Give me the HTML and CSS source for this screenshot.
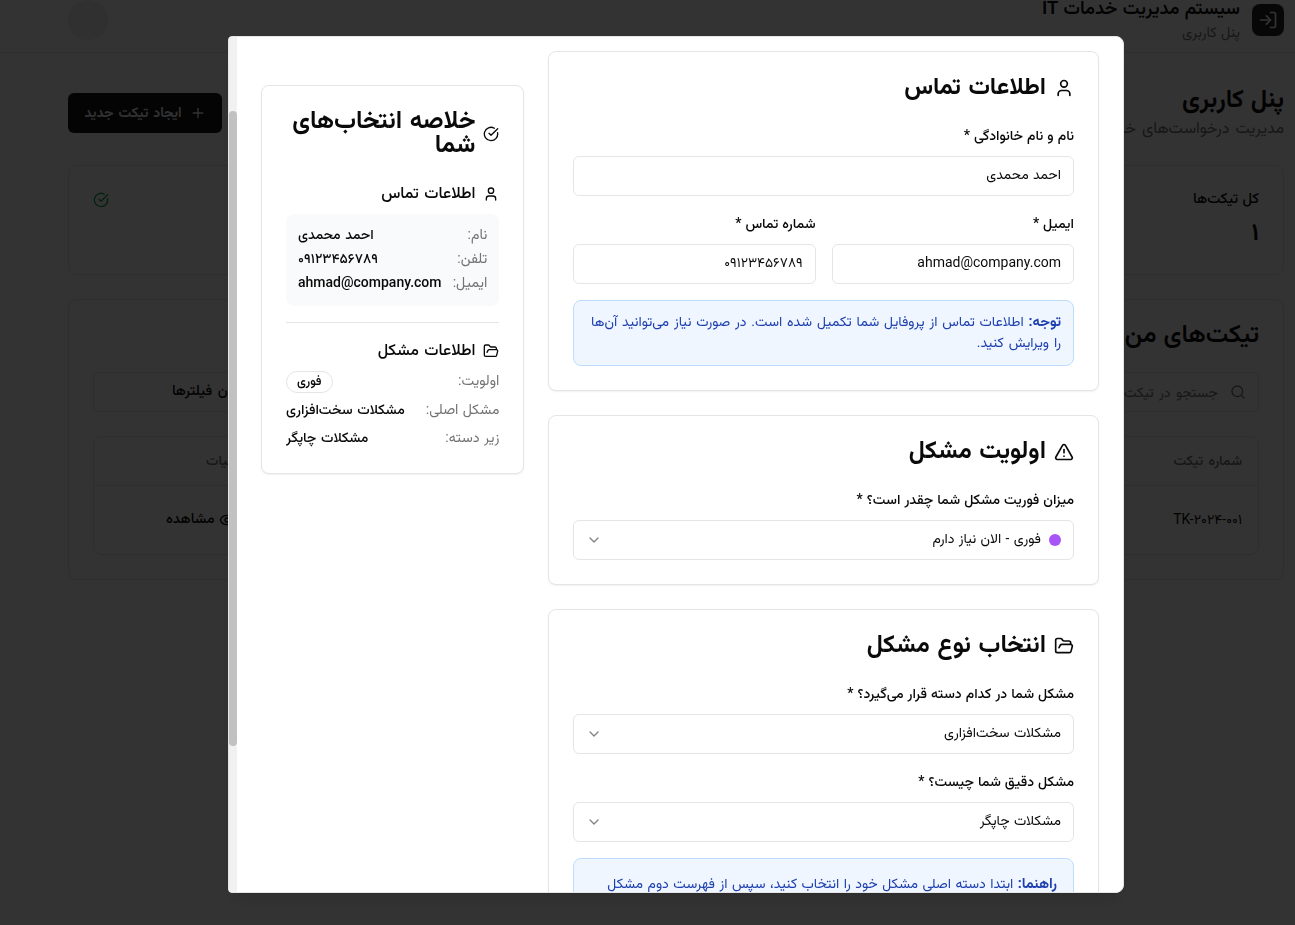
FILE: index.html
```html
<!DOCTYPE html>
<html lang="fa" dir="rtl">
<head>
<meta charset="utf-8">
<title>سیستم مدیریت خدمات IT</title>
<link rel="stylesheet" href="styles.css">
</head>
<body>
<svg width="0" height="0" class="sprite" aria-hidden="true">
  <symbol id="user" viewBox="0 0 24 24"><path d="M19 21v-2a4 4 0 0 0-4-4H9a4 4 0 0 0-4 4v2"/><circle cx="12" cy="7" r="4"/></symbol>
  <symbol id="check" viewBox="0 0 24 24"><path d="M21.801 10A10 10 0 1 1 17 3.335"/><path d="m9 11 3 3L22 4"/></symbol>
  <symbol id="folder" viewBox="0 0 24 24"><path d="m6 14 1.5-2.9A2 2 0 0 1 9.24 10H20a2 2 0 0 1 1.94 2.5l-1.54 6a2 2 0 0 1-1.95 1.5H4a2 2 0 0 1-2-2V5a2 2 0 0 1 2-2h3.9a2 2 0 0 1 1.69.9l.81 1.2a2 2 0 0 0 1.67.9H18a2 2 0 0 1 2 2v2"/></symbol>
  <symbol id="alert" viewBox="0 0 24 24"><path d="m21.73 18-8-14a2 2 0 0 0-3.48 0l-8 14A2 2 0 0 0 4 21h16a2 2 0 0 0 1.73-3"/><path d="M12 9v4"/><path d="M12 17h.01"/></symbol>
  <symbol id="chevron" viewBox="0 0 24 24"><path d="m6 9 6 6 6-6"/></symbol>
  <symbol id="login" viewBox="0 0 24 24"><path d="M15 3h4a2 2 0 0 1 2 2v14a2 2 0 0 1-2 2h-4"/><path d="m10 17 5-5-5-5"/><path d="M15 12H3"/></symbol>
  <symbol id="plus" viewBox="0 0 24 24"><path d="M5 12h14"/><path d="M12 5v14"/></symbol>
  <symbol id="search" viewBox="0 0 24 24"><circle cx="11" cy="11" r="8"/><path d="m21 21-4.3-4.3"/></symbol>
  <symbol id="eye" viewBox="0 0 24 24"><path d="M2.06 12.35a1 1 0 0 1 0-.7 10.75 10.75 0 0 1 19.88 0 1 1 0 0 1 0 .7 10.75 10.75 0 0 1-19.88 0"/><circle cx="12" cy="12" r="3"/></symbol>
</svg>

<div class="page">
  <header class="topbar">
    <div class="brand">
      <span class="logo"><svg class="icon i20"><use href="#login"/></svg></span>
      <div class="brand-text"><div class="brand-name"><span>سیستم مدیریت خدمات IT</span></div><div class="brand-sub"><span>پنل کاربری</span></div></div>
    </div>
    <span class="avatar"></span>
  </header>
  <main class="content">
    <div class="heading">
      <div><h1><span>پنل کاربری</span></h1><p><span>مدیریت درخواست‌های خدمات</span></p></div>
      <button class="new-ticket"><svg class="icon i16"><use href="#plus"/></svg><span>ایجاد تیکت جدید</span></button>
    </div>
    <div class="stats">
      <div class="stat"><div><div class="stat-label"><span>کل تیکت‌ها</span></div><div class="stat-value"><span>۱</span></div></div></div>
      <div class="stat"></div>
      <div class="stat"></div>
      <div class="stat"><div></div><svg class="icon i16 green"><use href="#check"/></svg></div>
    </div>
    <section class="tickets">
      <h2><span>تیکت‌های من</span></h2>
      <div class="filters">
        <div class="search"><svg class="icon i16"><use href="#search"/></svg><span>جستجو در تیکت</span></div>
        <div class="filter-btn"><span>نشان دادن فیلترها</span></div>
      </div>
      <div class="table">
        <div class="tr th"><span>شماره تیکت</span><span class="ops">عملیات</span></div>
        <div class="tr td"><span class="tk" dir="ltr">TK-۲۰۲۴-۰۰۱</span><span class="view"><svg class="icon i16"><use href="#eye"/></svg><span>مشاهده</span></span></div>
      </div>
    </section>
  </main>
</div>

<div class="overlay"></div>
<div class="modal" role="dialog">
  <div class="modal-body">
    <div class="forms">
      <section class="card">
        <h3><svg class="icon i20"><use href="#user"/></svg><span>اطلاعات تماس</span></h3>
        <label><span>نام و نام خانوادگی *</span></label>
        <div class="field"><span>احمد محمدی</span></div>
        <div class="two">
          <div><label><span>ایمیل *</span></label><div class="field"><span class="latin">ahmad@company.com</span></div></div>
          <div><label><span>شماره تماس *</span></label><div class="field"><span class="num">۰۹۱۲۳۴۵۶۷۸۹</span></div></div>
        </div>
        <div class="note"><b>توجه:</b> اطلاعات تماس از پروفایل شما تکمیل شده است. در صورت نیاز می‌توانید آن‌ها<br>را ویرایش کنید.</div>
      </section>
      <section class="card">
        <h3 class="wide"><svg class="icon i20"><use href="#alert"/></svg><span>اولویت مشکل</span></h3>
        <label><span>میزان فوریت مشکل شما چقدر است؟ *</span></label>
        <div class="field"><i class="dot"></i><span>فوری - الان نیاز دارم</span><svg class="icon i16 chev"><use href="#chevron"/></svg></div>
      </section>
      <section class="card">
        <h3 class="wide"><svg class="icon i20"><use href="#folder"/></svg><span>انتخاب نوع مشکل</span></h3>
        <label><span>مشکل شما در کدام دسته قرار می‌گیرد؟ *</span></label>
        <div class="field"><span>مشکلات سخت‌افزاری</span><svg class="icon i16 chev"><use href="#chevron"/></svg></div>
        <label><span>مشکل دقیق شما چیست؟ *</span></label>
        <div class="field"><span>مشکلات چاپگر</span><svg class="icon i16 chev"><use href="#chevron"/></svg></div>
        <div class="note help"><b>راهنما:</b> ابتدا دسته اصلی مشکل خود را انتخاب کنید، سپس از فهرست دوم مشکل</div>
      </section>
    </div>
    <aside class="card summary">
      <h3><svg class="icon i16"><use href="#check"/></svg><span>خلاصه انتخاب‌های<br>شما</span></h3>
      <h4><svg class="icon i16"><use href="#user"/></svg><span>اطلاعات تماس</span></h4>
      <div class="box">
        <div class="row"><span class="k">نام:</span><span class="v">احمد محمدی</span></div>
        <div class="row"><span class="k">تلفن:</span><span class="v num">۰۹۱۲۳۴۵۶۷۸۹</span></div>
        <div class="row"><span class="k">ایمیل:</span><span class="v latin">ahmad@company.com</span></div>
      </div>
      <hr>
      <h4><svg class="icon i16"><use href="#folder"/></svg><span>اطلاعات مشکل</span></h4>
      <div class="rows">
        <div class="row"><span class="k">اولویت:</span><span class="badge">فوری</span></div>
        <div class="row"><span class="k">مشکل اصلی:</span><span class="v">مشکلات سخت‌افزاری</span></div>
        <div class="row"><span class="k">زیر دسته:</span><span class="v">مشکلات چاپگر</span></div>
      </div>
    </aside>
  </div>
  <div class="scrollbar"><div class="thumb"></div></div>
</div>
</body>
</html>
```
FILE: styles.css
```css
* { box-sizing: border-box; margin: 0; padding: 0; }
body {
  height: 925px; overflow: hidden; background: #fff; color: #0a0a0a;
  font: 14px/20px Roboto, "Vazirmatn", "Noto Sans Arabic", "Noto Sans", "DejaVu Sans", sans-serif;
  white-space: nowrap; word-spacing: .8px;
}
.sprite { position: absolute; }
.icon { fill: none; stroke: currentColor; stroke-width: 2; stroke-linecap: round; stroke-linejoin: round; flex: none; }
.i16 { width: 16px; height: 16px; }
.i20 { width: 20px; height: 20px; }

.topbar { height: 53px; border-bottom: 1px solid #e5e5e5; padding: 0 11px 0 68px; display: flex; justify-content: space-between; align-items: flex-start; }
.brand { display: flex; gap: 12px; }
.logo { width: 32px; height: 32px; margin-top: 4px; border-radius: 8px; background: #262626; color: #fff; display: flex; align-items: center; justify-content: center; }
.brand-name { font-size: 18.4px; font-weight: 600; line-height: 20px; margin-top: -2px; }
.brand-sub { font-size: 14.4px; color: #737373; margin-top: 5px; }
.avatar { width: 40px; height: 40px; border-radius: 50%; background: #f0f0f0; }
.content { padding: 32px 11px 0 68px; }
.heading { display: flex; justify-content: space-between; height: 80px; }
.heading h1 { font-size: 24.8px; line-height: 32px; margin: -2px 0 1px; }
.heading p { font-size: 16px; line-height: 24px; color: #737373; word-spacing: 2px; }
.new-ticket { height: 40px; width: 154px; margin-top: 8px; border: 0; border-radius: 6px; background: #171717; color: #fafafa; font: inherit; word-spacing: 1.5px; font-weight: 600; display: flex; align-items: center; gap: 8px; justify-content: center; }
.new-ticket span { margin-bottom: 3px; }
.stats { display: grid; grid-template-columns: repeat(4, 1fr); gap: 24px; }
.stat { height: 110px; border: 1px solid #e5e5e5; border-radius: 8px; padding: 24px; display: flex; justify-content: space-between; }
.stat-label { font-size: 14.6px; font-weight: 500; margin-top: -2px; }
.stat-value { font-size: 24px; line-height: 32px; font-weight: 700; margin-top: 8px; }
.green { color: #16a34a; margin-top: 2px; }
.tickets { margin-top: 24px; border: 1px solid #e5e5e5; border-radius: 8px; padding: 24px; height: 281px; }
.tickets h2 { font-size: 25px; line-height: 24px; font-weight: 600; margin-top: -2px; }
.filters { display: flex; justify-content: space-between; margin-top: 26px; }
.search { width: 700px; height: 40px; border: 1px solid #e5e5e5; border-radius: 6px; padding: 0 12px; color: #737373; display: flex; align-items: center; gap: 12px; word-spacing: 2px; }
.filter-btn { width: 200px; height: 40px; border: 1px solid #e5e5e5; border-radius: 6px; padding: 0 0 3px 78px; font-size: 14.4px; font-weight: 500; word-spacing: 2px; display: flex; align-items: center; justify-content: flex-end; }
.table { margin-top: 24px; border: 1px solid #e5e5e5; border-radius: 8px; height: 119px; }
.tr { display: flex; justify-content: space-between; align-items: center; padding: 0 16px; }
.th { height: 49px; border-bottom: 1px solid #e5e5e5; color: #737373; font-weight: 500; padding-bottom: 3px; word-spacing: 2px; }
.td { height: 68px; }
.tk { margin-bottom: 2px; }
.ops { margin-left: 96px; }
.view { margin-left: 56px; display: flex; align-items: center; gap: 5px; font-weight: 500; font-size: 14.4px; }
.view span { margin-bottom: 2px; }

.overlay { position: fixed; inset: 0; background: rgba(0, 0, 0, .8); }
.modal {
  position: fixed; left: 228px; top: 36px; width: 896px; height: 857px;
  background: #fff; border: 1px solid #e5e5e5; border-radius: 4px 8px 8px 4px; overflow: hidden;
  box-shadow: 0 10px 15px -3px rgba(0, 0, 0, .1), 0 4px 6px -4px rgba(0, 0, 0, .1);
  display: flex;
}
.modal-body { flex: 1; padding: 14px 24px 0; display: grid; grid-template-columns: 550.66px 263.33px; gap: 24px; align-items: start; }
.forms { display: flex; flex-direction: column; gap: 24px; }
.card { border: 1px solid #e5e5e5; border-radius: 8px; padding: 24px; background: #fff; box-shadow: 0 1px 2px rgba(0, 0, 0, .06); }
.card h3 { display: flex; align-items: center; gap: 8px; font-size: 24px; line-height: 24px; font-weight: 700; margin-bottom: 24px; word-spacing: 1.5px; }
.card h3.wide { font-size: 24.4px; }
.card h3 span { margin: -2px 0 2px; }
.card label { display: block; line-height: 24px; margin: -1px 0 9px; font-weight: 500; word-spacing: .5px; }
.field { height: 40px; border: 1px solid #e5e5e5; border-radius: 6px; padding: 0 12px; display: flex; align-items: center; margin-bottom: 16px; }
.field span { margin-bottom: 4px; }
.two { display: grid; grid-template-columns: 1fr 1fr; gap: 16px; }
.card > .field:last-child { margin-bottom: 0; }
.num { font-size: 13.8px; }
.dot { width: 12px; height: 12px; border-radius: 50%; background: #a855f7; margin-left: 8px; }
.chev { margin-right: auto; opacity: .5; }
.note { height: 66px; border: 1px solid #bfdbfe; border-radius: 8px; background: #eff6ff; color: #1e40af; padding: 10px 12px; word-spacing: 1.35px; }
.note b { font-weight: 700; font-size: 14.4px; }
.help { padding: 14px 16px; height: 88px; word-spacing: 1px; }

.summary { margin-top: 34px; height: 389px; }
.summary h3 { font-size: 24.6px; }
.summary h4 { display: flex; align-items: center; gap: 8px; font-size: 16px; line-height: 24px; font-weight: 500; word-spacing: 1.5px; }
.summary h4 span { margin: -1px 0 1px; }
.box { margin-top: 8px; padding: 12px; border-radius: 8px; background: #f9fafb; display: flex; flex-direction: column; gap: 4px; }
.row { display: flex; justify-content: space-between; align-items: center; height: 20px; }
.k, .v { margin-bottom: 4px; }
.k { color: #737373; font-size: 14.3px; }
.v { font-weight: 500; word-spacing: 1.2px; }
hr { border: 0; border-top: 1px solid #e5e5e5; margin: 16px 0; }
.rows { display: flex; flex-direction: column; gap: 8px; margin-top: 8px; }
.rows .row:first-child { height: 22px; }
.badge { border: 1px solid #e5e5e5; border-radius: 11px; height: 22px; line-height: 18px; padding: 0 10px; font-size: 12.3px; font-weight: 600; }

.scrollbar { width: 8px; flex: none; background: #f1f1f1; padding-top: 74px; }
.thumb { height: 635px; border-radius: 4px; background: #c1c1c1; }
```
